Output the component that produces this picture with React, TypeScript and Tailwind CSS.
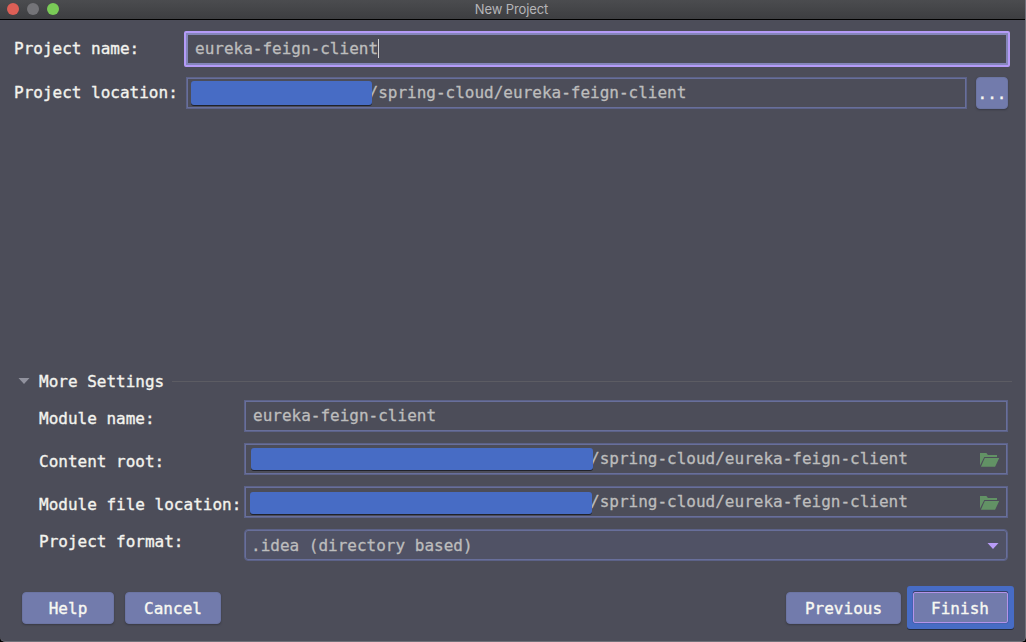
import type { ReactNode } from "react";

function Redacted({ className }: { className: string }) {
  return <span className={`relative z-10 shrink-0 rounded-[3px] bg-[#476cc5] shadow-[0_1px_0_#20222c] ${className}`} />;
}

function FolderIcon() {
  return (
    <svg className="ml-auto shrink-0" width="20" height="16" viewBox="0 0 20 16" fill="#629265">
      <path d="M0 13.6V1h6.4l1.5 2H17v2H4.3L0 13.6Z" />
      <path d="M4.8 6H19.2l-4.1 8.7H.9L4.8 6Z" />
    </svg>
  );
}

function Label({ className = "", children }: { className?: string; children: ReactNode }) {
  return <span className={`shrink-0 whitespace-pre leading-[20px] text-[#f3f3ee] [-webkit-text-stroke:0.35px_#f3f3ee] ${className}`}>{children}</span>;
}

function Field({ className = "", children }: { className?: string; children: ReactNode }) {
  return (
    <div className={`flex shrink-0 items-start border border-[#5c6288] whitespace-pre leading-[20px] text-[#bdbdbd] inset-shadow-[0_0_0_1px_#686f9b] [-webkit-text-stroke:0.3px_#bdbdbd] ${className}`}>
      {children}
    </div>
  );
}

function Button({ className = "", children }: { className?: string; children: ReactNode }) {
  return (
    <button className={`flex h-8 shrink-0 items-center justify-center rounded-[4px] border border-[#6c75a3] bg-[#727bac] text-[#f8f8f2] shadow-[0_1px_2px_#383945] [-webkit-text-stroke:0.35px_#f8f8f2] ${className}`}>
      {children}
    </button>
  );
}

export default function App() {
  return (
    <div className="h-[642px] w-[1026px] overflow-hidden bg-black">
      <main className="flex h-full w-full flex-col overflow-hidden rounded-b-[5px] border-r border-b border-[#71717a] bg-[#4c4d59] font-['DejaVu_Sans_Mono',monospace] text-[16px]">
        <header className="flex h-5 shrink-0 items-center border-b border-black bg-linear-to-b from-[#4b4c4f] to-[#3d3e41] pl-[7px]">
          <div className="flex w-[120px] gap-2 pb-px">
            <span className="size-3 rounded-full bg-[#dd5f56]" />
            <span className="size-3 rounded-full bg-[#747478]" />
            <span className="size-3 rounded-full bg-[#7acb57]" />
          </div>
          <h1 className="-ml-[120px] flex-1 pr-[9px] text-center font-['Inter',sans-serif] text-[13px] leading-[17px] tracking-[-0.1px] text-[#b5b5b8]">New Project</h1>
        </header>

        <section className="flex h-[47px] shrink-0 items-start pt-[11px] pl-[14px]">
          <Label className="w-[170px] pt-[8px]">Project name:</Label>
          <div className="flex h-9 w-[826px] rounded-[2px] border-2 border-[#b59bf8] bg-[#8586bb] p-[2px]">
            <div className="flex h-full w-full items-start bg-[#4c4d59] pt-[4px] pl-[7px] leading-[20px] text-[#bdbdbd] [-webkit-text-stroke:0.3px_#bdbdbd]">
              eureka-feign-client<span className="h-[19px] w-px bg-[#d3d3d3]" />
            </div>
          </div>
        </section>

        <section className="flex shrink-0 items-start pt-[10px] pl-[14px]">
          <Label className="w-[172px] pt-[6px]">Project location:</Label>
          <Field className="h-8 w-[781px] pt-[5px] pl-[4px]">
            <Redacted className="-mt-[2px] h-6 w-[181px]" />
            <span className="-ml-[3.5px]">/spring-cloud/eureka-feign-client</span>
          </Field>
          <Button className="ml-[9px] w-8 pt-[2px]">...</Button>
        </section>

        <section className="mt-auto shrink-0 text-[16px]">
          <div className="flex h-5 items-center pl-[18px]">
            <svg width="12" height="8" viewBox="0 0 12 8"><path d="M.5 1h11L6 7Z" fill="#91929e" /></svg>
            <Label className="ml-[9px] pt-[2px]">More Settings</Label>
            <span className="ml-[8px] h-px w-[840px] bg-[#5c5c63]" />
          </div>
          <div className="grid grid-cols-[205px_764px] gap-y-[11px] pt-[9px] pl-[39px]">
            <Label className="pt-[9px]">Module name:</Label>
            <Field className="h-8 pt-[5px] pl-[8px]">eureka-feign-client</Field>
            <Label className="pt-[9px]">Content root:</Label>
            <Field className="h-8 pt-[5px] pl-[6px]">
              <Redacted className="-mt-px h-[22px] w-[342px]" />
              <span className="-ml-[3px]">/spring-cloud/eureka-feign-client</span>
              <span className="mt-[3px] mr-[7px] ml-auto"><FolderIcon /></span>
            </Field>
            <Label className="pt-[9px]">Module file location:</Label>
            <Field className="h-8 pt-[5px] pl-[5px]">
              <Redacted className="h-[22px] w-[342px]" />
              <span className="-ml-[2px]">/spring-cloud/eureka-feign-client</span>
              <span className="mt-[3px] mr-[7px] ml-auto"><FolderIcon /></span>
            </Field>
            <Label className="pt-[3px]">Project format:</Label>
            <Field className="h-8 rounded-[4px] bg-[#505265] pt-[6px] pl-[6px]">
              .idea (directory based)
              <svg className="mt-[6px] mr-[8px] ml-auto" width="12" height="8" viewBox="0 0 12 8"><path d="M.5 1h11L6 7Z" fill="#b99cf8" /></svg>
            </Field>
          </div>
        </section>

        <footer className="flex h-[80px] shrink-0 items-start pt-[25px] pl-[22px]">
          <Button className="mt-[6px] w-[92px] pt-[2px]">Help</Button>
          <Button className="mt-[6px] ml-[11px] w-[96px] pt-[2px]">Cancel</Button>
          <Button className="mt-[6px] ml-[565px] w-[115px] pt-[2px]">Previous</Button>
          <div className="ml-[6px] flex h-[43px] w-[107px] items-start rounded-[3px] bg-[#476cc5] p-[6px] shadow-[0_1px_0_#252b3c]">
            <div className="flex h-[31px] w-[95px] items-center justify-center rounded-[2px] border border-[#b493e9] bg-[#727bac] pt-[2px] pr-px text-[#f8f8f2] shadow-[0_-1px_0_#34395a] outline-1 outline-[#424f8655] [-webkit-text-stroke:0.35px_#f8f8f2]">Finish</div>
          </div>
        </footer>
      </main>
    </div>
  );
}
